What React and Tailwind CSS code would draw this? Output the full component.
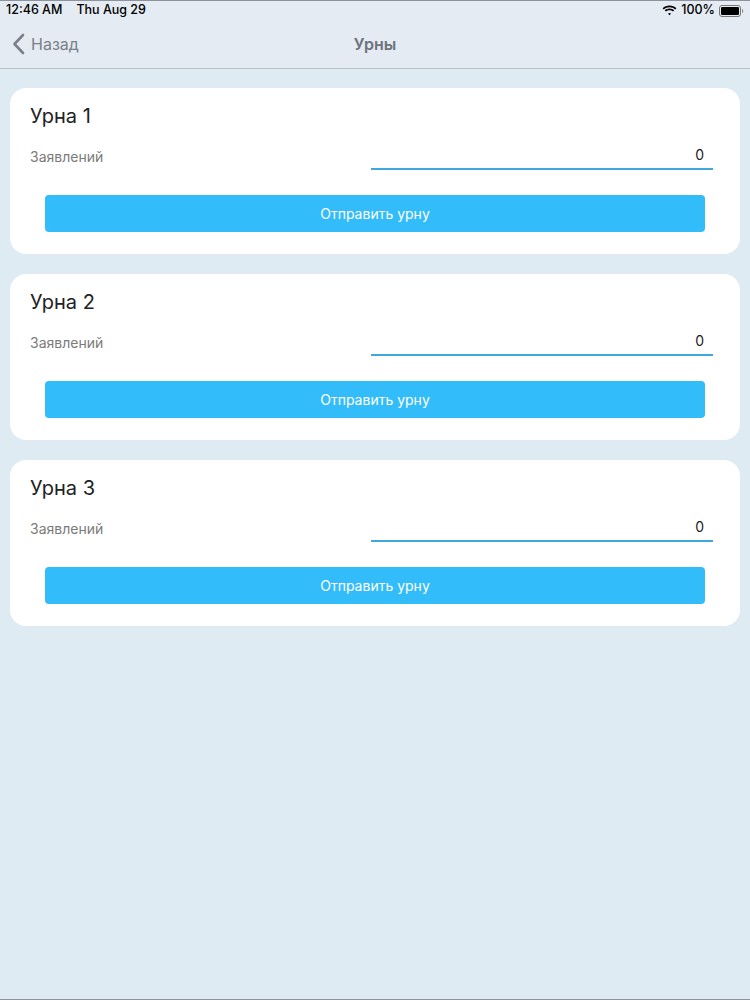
import React from "react";

function Wifi() {
  return (
    <svg width="15" height="11" viewBox="0 0 15 11" fill="#000">
      <path d="M7.5 2.2c2.2 0 4.2.85 5.7 2.25l1.2-1.25C12.6 1.45 10.2.4 7.5.4S2.4 1.45.6 3.2l1.2 1.25C3.3 3.05 5.3 2.2 7.5 2.2z" />
      <path d="M7.5 5.2c1.35 0 2.6.5 3.55 1.35l1.2-1.25C11 4.15 9.3 3.45 7.5 3.45S4 4.15 2.75 5.3l1.2 1.25C4.9 5.7 6.15 5.2 7.5 5.2z" />
      <path d="M7.5 8.1c.55 0 1.05.2 1.45.55L7.5 10.2 6.05 8.65c.4-.35.9-.55 1.45-.55z" />
    </svg>
  );
}

function Battery() {
  return (
    <svg width="25" height="12" viewBox="0 0 25 12">
      <rect x="0.5" y="0.5" width="21" height="11" rx="2.5" fill="none" stroke="#777" />
      <rect x="2" y="2" width="18" height="8" rx="1.2" fill="#000" />
      <path d="M23 4v4c.8-.3 1.2-1.1 1.2-2s-.4-1.7-1.2-2z" fill="#888" />
    </svg>
  );
}

function UrnCard({ n }) {
  return (
    <div className="bg-white rounded-[16px] pl-[20px] pr-[27px] pt-[16px] pb-[22px]">
      <div className="text-[20px] leading-[24px] text-[#222]">Урна {n}</div>
      <div className="flex items-end mt-[16px] h-[26px]">
        <div className="text-[14px] leading-[18px] text-[#7b7b7b] mb-[4px]">Заявлений</div>
        <div className="ml-auto w-[342px] h-[26px] border-b-2 border-[#3fa9dd] flex items-start justify-end pr-[9px] pt-[2px]">
          <span className="text-[14px] leading-[18px] text-[#222]">0</span>
        </div>
      </div>
      <button className="mt-[25px] ml-[15px] w-[660px] h-[37px] rounded-[4px] bg-[#33bcfa] text-white text-[14px] flex items-center justify-center">
        Отправить урну
      </button>
    </div>
  );
}

export default function App() {
  return (
    <div
      className="w-[750px] h-[1000px] bg-[#deebf3] flex flex-col border-t border-b border-[#8c939a] overflow-hidden"
      style={{ fontFamily: "Inter, Roboto, 'Noto Sans', sans-serif" }}
    >
      <div className="bg-[#e4ebf2] border-b border-[#b9bfc5]">
        <div className="h-[19px] flex items-center px-[6px] text-[12.5px] font-medium text-black">
          <span>12:46 AM</span>
          <span className="ml-[14px]">Thu Aug 29</span>
          <div className="ml-auto flex items-center gap-[4px]">
            <Wifi />
            <span>100%</span>
            <Battery />
          </div>
        </div>
        <div className="h-[48px] relative flex items-center">
          <div className="flex items-center pl-[12px] text-[#7a8089]">
            <svg width="13" height="22" viewBox="0 0 13 22" fill="none">
              <path d="M11 2L2.5 11 11 20" stroke="#7a8089" strokeWidth="2.6" strokeLinecap="round" strokeLinejoin="round" />
            </svg>
            <span className="ml-[6px] text-[16px]">Назад</span>
          </div>
          <div className="absolute left-0 right-0 text-center text-[16px] font-semibold text-[#6d737c] pointer-events-none">
            Урны
          </div>
        </div>
      </div>
      <div className="px-[10px] pt-[19px] flex flex-col gap-[20px]">
        <UrnCard n={1} />
        <UrnCard n={2} />
        <UrnCard n={3} />
      </div>
    </div>
  );
}
